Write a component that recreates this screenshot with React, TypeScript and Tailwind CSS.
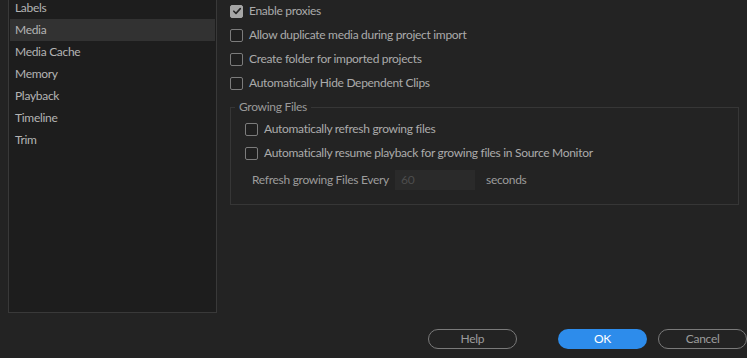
import React from 'react';

const categories = ['Labels', 'Media', 'Media Cache', 'Memory', 'Playback', 'Timeline', 'Trim'];

const Checkbox: React.FC<{ checked?: boolean }> = ({ checked }) => (
  <span
    className={`w-[13px] h-[13px] shrink-0 rounded-[2px] border flex items-center justify-center ${
      checked ? 'bg-[#a6a6a6] border-[#a6a6a6]' : 'bg-[#1f1f1f] border-[#7c7c7c]'
    }`}
  >
    {checked && (
      <svg width="10" height="10" viewBox="0 0 10 10" fill="none">
        <path d="M1.8 5.2 L4 7.4 L8.3 2.6" stroke="#262626" strokeWidth="1.6" strokeLinecap="round" strokeLinejoin="round" />
      </svg>
    )}
  </span>
);

const CheckRow: React.FC<{ label: string; checked?: boolean }> = ({ label, checked }) => (
  <label className="h-[24px] flex items-center gap-[6px] text-[#ababab]">
    <Checkbox checked={checked} />
    <span className="whitespace-nowrap">{label}</span>
  </label>
);

export default function App() {
  return (
    <div
      className="w-[747px] h-[358px] overflow-hidden bg-[#232323] text-[12px] leading-[16px] tracking-[-0.3px]"
      style={{ fontFamily: 'Lato, "Noto Sans", sans-serif' }}
    >
      <div className="flex h-[317px] -mt-[4px]">
        {/* category list */}
        <div className="ml-[8px] w-[209px] shrink-0 bg-[#1d1d1d] border border-[#393939] px-px">
          {categories.map((c) => (
            <div
              key={c}
              className={`h-[22px] flex items-center pl-[5px] text-[#b4b4b4] ${c === 'Media' ? 'bg-[#323232]' : ''}`}
            >
              {c}
            </div>
          ))}
        </div>

        {/* settings */}
        <div className="flex-1 pl-[13px] pr-[8px] pt-[3px]">
          <CheckRow label="Enable proxies" checked />
          <CheckRow label="Allow duplicate media during project import" />
          <CheckRow label="Create folder for imported projects" />
          <CheckRow label="Automatically Hide Dependent Clips" />

          <fieldset className="mt-[4px] border border-[#363636] px-[4px] pb-[14px]">
            <legend className="px-[4px] text-[#9a9a9a] leading-[16px]">Growing Files</legend>
            <div className="pl-[10px] mt-[2px]">
              <CheckRow label="Automatically refresh growing files" />
              <CheckRow label="Automatically resume playback for growing files in Source Monitor" />
              <div className="mt-[5px] h-[20px] flex items-center pl-[7px] text-[#9c9c9c]">
                <span className="w-[143px] shrink-0 whitespace-nowrap">Refresh growing Files Every</span>
                <div className="w-[80px] h-[20px] shrink-0 bg-[#2a2a2a] flex items-center pl-[6px] text-[#4d4d4d]">60</div>
                <span className="ml-[11px]">seconds</span>
              </div>
            </div>
          </fieldset>
        </div>
      </div>

      {/* buttons */}
      <div className="mt-[16px] flex items-center">
        <button className="ml-[428px] w-[89px] h-[20px] rounded-full border border-[#7a7a7a] text-[#9c9c9c] leading-none">
          Help
        </button>
        <button className="ml-[41px] w-[90px] h-[20px] rounded-full bg-[#2d8ceb] text-white leading-none">
          OK
        </button>
        <button className="ml-[11px] w-[89px] h-[20px] rounded-full border border-[#7a7a7a] text-[#9c9c9c] leading-none">
          Cancel
        </button>
      </div>
    </div>
  );
}
